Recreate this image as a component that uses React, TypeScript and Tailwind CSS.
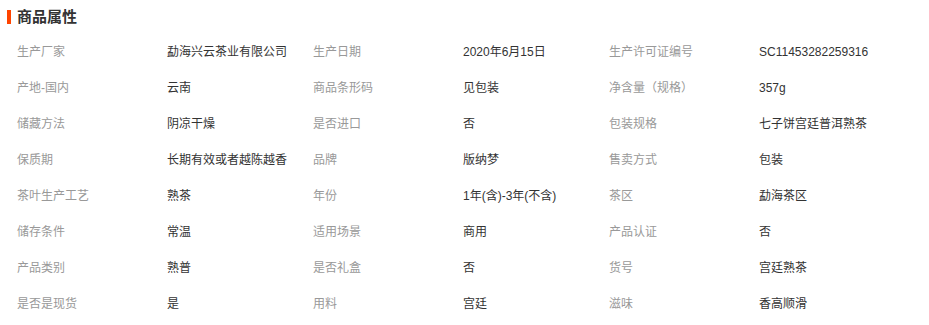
import React from "react";

const rows: [string, string, string, string, string, string][] = [
  ["生产厂家", "勐海兴云茶业有限公司", "生产日期", "2020年6月15日", "生产许可证编号", "SC11453282259316"],
  ["产地-国内", "云南", "商品条形码", "见包装", "净含量（规格）", "357g"],
  ["储藏方法", "阴凉干燥", "是否进口", "否", "包装规格", "七子饼宫廷普洱熟茶"],
  ["保质期", "长期有效或者越陈越香", "品牌", "版纳梦", "售卖方式", "包装"],
  ["茶叶生产工艺", "熟茶", "年份", "1年(含)-3年(不含)", "茶区", "勐海茶区"],
  ["储存条件", "常温", "适用场景", "商用", "产品认证", "否"],
  ["产品类别", "熟普", "是否礼盒", "否", "货号", "宫廷熟茶"],
  ["是否是现货", "是", "用料", "宫廷", "滋味", "香高顺滑"],
];

export default function App() {
  return (
    <div className="w-[929px] h-[325px] bg-white overflow-hidden font-['Liberation_Sans','Noto_Sans_CJK_SC',sans-serif]">
      {/* Section title */}
      <div className="h-[33px] flex items-center pl-[7px]">
        <span className="w-[4px] h-[14px] bg-[#ff4400] mr-[6px]" />
        <span className="text-[15px] font-bold text-[#333] leading-none">商品属性</span>
      </div>

      {/* Attribute table */}
      <div className="pl-[17px] pt-[1px] grid grid-cols-[150px_146px_150px_146px_150px_1fr] text-[12px] leading-none">
        {rows.map((r, i) => (
          <React.Fragment key={i}>
            {r.map((cell, j) => (
              <div
                key={j}
                className={`h-[36px] flex items-center whitespace-nowrap ${j % 2 === 0 ? "text-[#999]" : "text-[#333]"}`}
              >
                {cell}
              </div>
            ))}
          </React.Fragment>
        ))}
      </div>
    </div>
  );
}
